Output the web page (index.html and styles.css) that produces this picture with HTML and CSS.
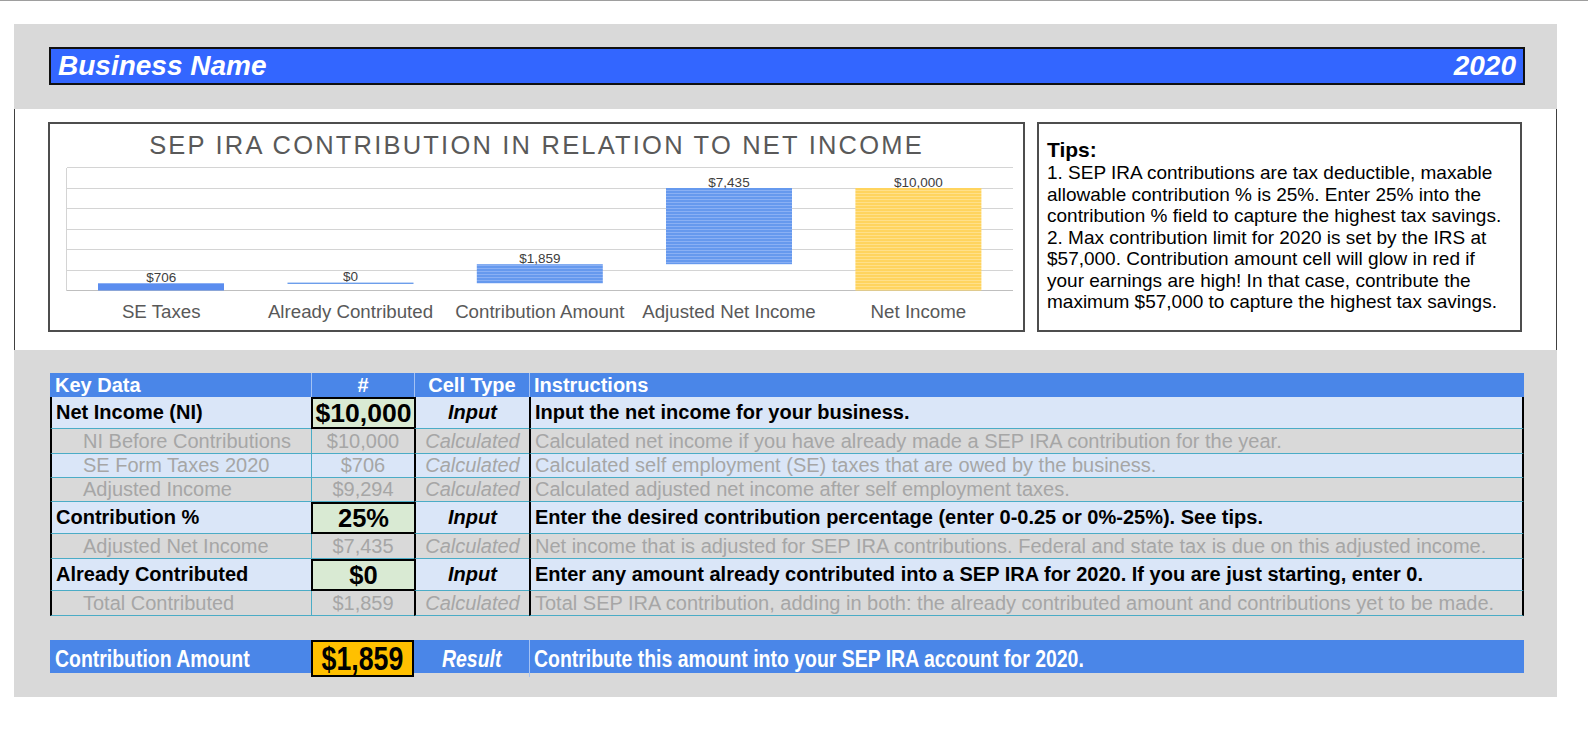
FILE: index.html
```html
<!DOCTYPE html>
<html>
<head>
<meta charset="utf-8">
<title>SEP IRA Contribution</title>
<link rel="stylesheet" href="styles.css">
</head>
<body>
<div class="topline"></div>
<div class="sheet">
  <header class="head-panel">
    <div class="titlebar"><span>Business Name</span><span>2020</span></div>
  </header>
  <section class="mid">
    <div class="chart">
      <div class="chart-title">SEP IRA CONTRIBUTION IN RELATION TO NET INCOME</div>
      <svg class="plot" width="973" height="166" viewBox="0 0 973 166">
        <defs>
          <pattern id="pb" width="8" height="3" patternUnits="userSpaceOnUse">
            <rect width="8" height="3" fill="#6699ee"/>
            <rect y="2" width="8" height="1" fill="#8ab0f4"/>
          </pattern>
          <pattern id="py" width="8" height="3" patternUnits="userSpaceOnUse">
            <rect width="8" height="3" fill="#ffd45e"/>
            <rect y="2" width="8" height="1" fill="#ffe08a"/>
          </pattern>
        </defs>
        <g class="grid" shape-rendering="crispEdges">
          <line x1="16.5" y1="3.5" x2="963" y2="3.5"/>
          <line x1="16.5" y1="24" x2="963" y2="24"/>
          <line x1="16.5" y1="44.5" x2="963" y2="44.5"/>
          <line x1="16.5" y1="65" x2="963" y2="65"/>
          <line x1="16.5" y1="85.5" x2="963" y2="85.5"/>
          <line x1="16.5" y1="106" x2="963" y2="106"/>
          <line x1="16.5" y1="3.5" x2="16.5" y2="126.5"/>
          <line class="axis" x1="16.5" y1="126.5" x2="963" y2="126.5"/>
        </g>
        <rect x="48" y="119.3" width="126" height="7.2" fill="#5b8def"/>
        <rect x="237.5" y="118.6" width="126" height="1.4" fill="#6d9eeb"/>
        <rect x="426.8" y="100.2" width="126" height="19.1" fill="url(#pb)"/>
        <rect x="616" y="24" width="126" height="76.2" fill="url(#pb)"/>
        <rect x="805.4" y="24" width="126" height="102.5" fill="url(#py)"/>
        <g class="dlabel">
          <text x="111.2" y="117.8">$706</text>
          <text x="300.5" y="117.2">$0</text>
          <text x="489.8" y="98.8">$1,859</text>
          <text x="679" y="22.6">$7,435</text>
          <text x="868.4" y="22.6">$10,000</text>
        </g>
        <g class="clabel">
          <text x="111.2" y="154.3">SE Taxes</text>
          <text x="300.5" y="154.3">Already Contributed</text>
          <text x="489.8" y="154.3">Contribution Amount</text>
          <text x="679" y="154.3">Adjusted Net Income</text>
          <text x="868.4" y="154.3">Net Income</text>
        </g>
      </svg>
    </div>
    <div class="tips">
      <div class="tips-title">Tips:</div>
      <p>1. SEP IRA contributions are tax deductible, maxable<br>allowable contribution % is 25%. Enter 25% into the<br>contribution % field to capture the highest tax savings.<br>2. Max contribution limit for 2020 is set by the IRS at<br>$57,000. Contribution amount cell will glow in red if<br>your earnings are high! In that case, contribute the<br>maximum $57,000 to capture the highest tax savings.</p>
    </div>
  </section>
  <section class="low">
    <div class="tbl">
      <div class="row hdr">
        <div class="k">Key Data</div>
        <div class="n">#</div>
        <div class="t">Cell Type</div>
        <div class="i">Instructions</div>
      </div>
      <div class="row inrow blue">
        <div class="k">Net Income (NI)</div>
        <div class="n inp big">$10,000</div>
        <div class="t">Input</div>
        <div class="i">Input the net income for your business.</div>
      </div>
      <div class="row calc h25">
        <div class="k">NI Before Contributions</div>
        <div class="n">$10,000</div>
        <div class="t">Calculated</div>
        <div class="i">Calculated net income if you have already made a SEP IRA contribution for the year.</div>
      </div>
      <div class="row calc h24 blue">
        <div class="k">SE Form Taxes 2020</div>
        <div class="n">$706</div>
        <div class="t">Calculated</div>
        <div class="i">Calculated self employment (SE) taxes that are owed by the business.</div>
      </div>
      <div class="row calc h24">
        <div class="k">Adjusted Income</div>
        <div class="n">$9,294</div>
        <div class="t">Calculated</div>
        <div class="i">Calculated adjusted net income after self employment taxes.</div>
      </div>
      <div class="row inrow blue">
        <div class="k">Contribution %</div>
        <div class="n inp">25%</div>
        <div class="t">Input</div>
        <div class="i">Enter the desired contribution percentage (enter 0-0.25 or 0%-25%). See tips.</div>
      </div>
      <div class="row calc h25">
        <div class="k">Adjusted Net Income</div>
        <div class="n">$7,435</div>
        <div class="t">Calculated</div>
        <div class="i">Net income that is adjusted for SEP IRA contributions. Federal and state tax is due on this adjusted income.</div>
      </div>
      <div class="row inrow blue">
        <div class="k">Already Contributed</div>
        <div class="n inp">$0</div>
        <div class="t">Input</div>
        <div class="i">Enter any amount already contributed into a SEP IRA for 2020. If you are just starting, enter 0.</div>
      </div>
      <div class="row calc h25">
        <div class="k">Total Contributed</div>
        <div class="n">$1,859</div>
        <div class="t">Calculated</div>
        <div class="i">Total SEP IRA contribution, adding in both: the already contributed amount and contributions yet to be made.</div>
      </div>
    </div>
    <div class="result">
      <div class="k"><span class="nar">Contribution Amount</span></div>
      <div class="n"><span class="nar mid-o">$1,859</span></div>
      <div class="t"><span class="nar mid-o">Result</span></div>
      <div class="i"><span class="nar">Contribute this amount into your SEP IRA account for 2020.</span></div>
    </div>
  </section>
</div>
</body>
</html>
```

FILE: styles.css
```css
* { box-sizing: border-box; }
body {
  margin: 0;
  background: #ffffff;
  font-family: "Liberation Sans", Arial, sans-serif;
  color: #000;
}
.topline { height: 1px; background: #9e9e9e; }
.sheet { width: 1543px; margin: 23px 0 0 14px; }

.head-panel { background: #d9d9d9; padding: 23px 32px 24px 35px; }
.titlebar {
  height: 38px;
  background: #3366ff;
  border: 2px solid #111;
  display: flex;
  justify-content: space-between;
  align-items: center;
  padding: 0 7px;
  color: #fff;
  font-weight: bold;
  font-style: italic;
  font-size: 28px;
}

.mid {
  height: 241px;
  border-left: 1px solid #404040;
  border-right: 1px solid #404040;
  padding: 13px 0 0 33px;
  display: flex;
  gap: 12px;
  align-items: flex-start;
}
.chart { width: 977px; height: 210px; border: 2px solid #4d4d4d; }
.chart-title {
  height: 40px;
  padding-top: 7px;
  text-align: center;
  font-size: 25.5px;
  line-height: 29px;
  letter-spacing: 2.2px;
  color: #595959;
}
.plot { display: block; }
.grid line { stroke: #d4d4d4; stroke-width: 1; }
.grid line.axis { stroke: #bfbfbf; }
.dlabel text { font-size: 13.5px; fill: #404040; text-anchor: middle; font-family: "Liberation Sans", Arial, sans-serif; }
.clabel text { font-size: 18.7px; fill: #595959; text-anchor: middle; font-family: "Liberation Sans", Arial, sans-serif; }

.tips { width: 485px; height: 210px; border: 2px solid #4d4d4d; padding: 14px 8px 0 8px; }
.tips-title { font-size: 21px; font-weight: bold; line-height: 24px; }
.tips p { margin: 0; font-size: 19px; line-height: 21.5px; white-space: nowrap; }

.low { background: #d9d9d9; padding: 23px 33px 24px 36px; }
.tbl { width: 1474px; }
.row { display: grid; grid-template-columns: 261px 103px 115px 1fr; font-size: 20px; }
.row > div {
  display: flex;
  align-items: center;
  white-space: nowrap;
  overflow: hidden;
  border-bottom: 1px solid #4bacc6;
}
.row > .k { padding-left: 4px; border-left: 2px solid #000; }
.row > .n { justify-content: center; border-left: 1px solid #4bacc6; }
.row > .t { justify-content: center; border-left: 2px solid #000; font-style: italic; }
.row > .i { padding-left: 4px; border-left: 2px solid #000; border-right: 2px solid #000; }

.row.hdr { height: 24px; background: #4a86e8; color: #fff; font-weight: bold; }
.row.hdr > div { border: 0; border-left: 1px solid #a4c2f4; }
.row.hdr > .k { border-left: 0; padding-left: 5px; }
.row.hdr > .t { font-style: normal; }

.row.blue { background: #dae6f8; }
.row.inrow { height: 32px; font-weight: bold; }
.row.inrow > .n.inp {
  background: #d9ead3;
  border: 2px solid #000;
  border-right: 0;
  font-size: 25.5px;
}
.row.inrow > .n.inp.big { font-size: 26.5px; }
.row.calc { color: #a6a6a6; }
.row.calc > .k { padding-left: 31px; }
.row.h25 { height: 25px; }
.row.h24 { height: 24px; }

.result {
  display: grid;
  grid-template-columns: 261px 103px 115px 1fr;
  height: 33px;
  margin-top: 24px;
  background: #4a86e8;
  color: #fff;
  font-weight: bold;
  font-size: 24px;
}
.result > div { display: flex; align-items: center; white-space: nowrap; }
.result .nar { display: inline-block; transform: scaleX(0.81); transform-origin: left center; line-height: 1; }
.result .nar.mid-o { transform-origin: center center; }
.result > .k { padding-left: 5px; }
.result > .n {
  justify-content: center;
  background: #ffc000;
  border: 2px solid #000;
  color: #000;
  font-size: 33px;
}
.result > .t { justify-content: center; font-style: italic; }
.result > .i { padding-left: 4px; border-left: 1px solid #a4c2f4; }
```
